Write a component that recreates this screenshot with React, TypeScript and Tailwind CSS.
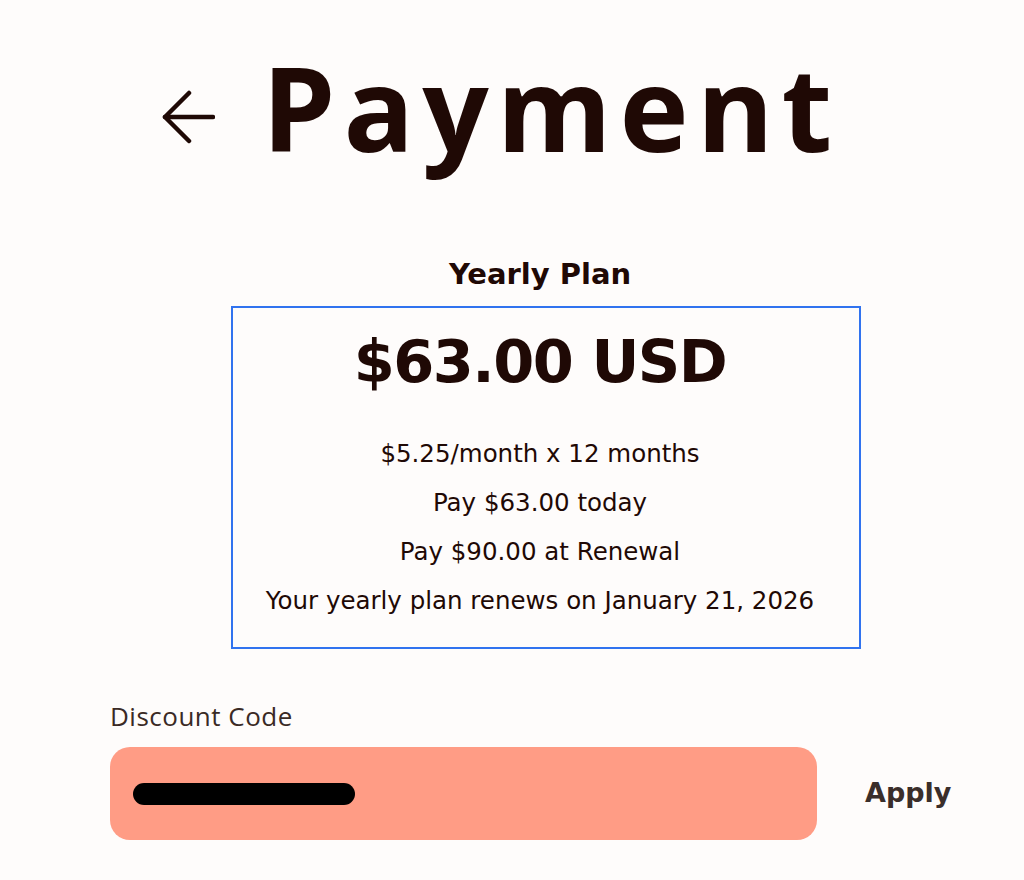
const lines = [
  "$5.25/month x 12 months",
  "Pay $63.00 today",
  "Pay $90.00 at Renewal",
  "Your yearly plan renews on January 21, 2026",
];

function BackArrow() {
  return (
    <svg className="mt-[20px]" width="54" height="54" viewBox="0 0 54 54" fill="none" stroke="currentColor" strokeWidth="4.5" strokeLinecap="round" strokeLinejoin="round">
      <path d="M52 27H4" />
      <path d="M28 3 4 27l24 24" />
    </svg>
  );
}

export default function App() {
  return (
    <div className="min-h-[880px] w-full bg-[#fefcfb] text-[#1f0905] font-['DejaVu_Sans','Noto_Sans',sans-serif]">
      <div className="ml-[110px] w-[860px] pt-[32px]">
        {/* header */}
        <div className="flex items-center pl-[51px]">
          <BackArrow />
          <h1 className="ml-[47px] font-['Open_Sans',sans-serif] text-[117px] font-bold leading-[150px] tracking-[8px]">
            Payment
          </h1>
        </div>

        {/* plan */}
        <div className="mt-[72px] flex flex-col items-center">
          <h2 className="text-[29px] font-bold leading-[40px]">Yearly Plan</h2>
          <div className="ml-[11px] mt-[12px] flex w-[630px] flex-col items-center border-2 border-[#3173ef] pb-[30px] pr-[11px] pt-[10px]">
            <div className="text-[59px] font-bold leading-[88px] tracking-[-1.5px]">$63.00 USD</div>
            <div className="mt-[32px] flex flex-col items-center gap-[17px]">
              {lines.map((l) => (
                <p key={l} className="text-[24.5px] leading-[32px]">
                  {l}
                </p>
              ))}
            </div>
          </div>
        </div>

        {/* discount */}
        <div className="mt-[52px]">
          <label className="block font-['Open_Sans',sans-serif] text-[26px] leading-[30px] tracking-[0.5px] text-[#3a2a25]">
            Discount Code
          </label>
          <div className="mt-[16px] flex items-center">
            <div className="flex h-[93px] w-[707px] items-center rounded-[20px] bg-[#ff9c85] px-[23px]">
              <span className="h-[22px] w-[222px] rounded-full bg-black" />
            </div>
            <button className="ml-[48px] text-[27px] font-bold text-[#3a2e2a]">Apply</button>
          </div>
        </div>
      </div>
    </div>
  );
}
